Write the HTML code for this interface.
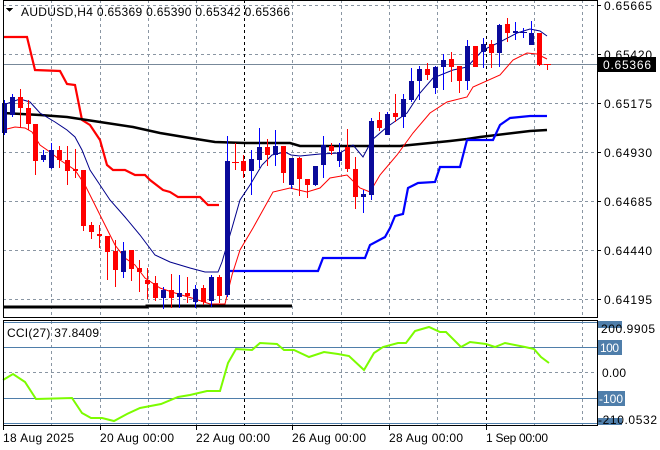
<!DOCTYPE html>
<html><head><meta charset="utf-8"><style>
html,body{margin:0;padding:0;background:#fff;}
svg{display:block;font-family:"Liberation Sans",sans-serif;}
</style></head><body>
<svg width="660" height="450" viewBox="0 0 660 450" xmlns="http://www.w3.org/2000/svg" shape-rendering="crispEdges">
<rect width="660" height="450" fill="#fff"/>
<g stroke="#8a96a3" stroke-width="1" stroke-dasharray="3,3">
<line x1="3" y1="5.5" x2="597" y2="5.5"/><line x1="3" y1="54.5" x2="597" y2="54.5"/><line x1="3" y1="103.5" x2="597" y2="103.5"/><line x1="3" y1="152.5" x2="597" y2="152.5"/><line x1="3" y1="201.5" x2="597" y2="201.5"/><line x1="3" y1="250.5" x2="597" y2="250.5"/><line x1="3" y1="299.5" x2="597" y2="299.5"/>
<line x1="51.5" y1="0" x2="51.5" y2="318"/><line x1="100.5" y1="0" x2="100.5" y2="318"/><line x1="148.5" y1="0" x2="148.5" y2="318"/><line x1="196.5" y1="0" x2="196.5" y2="318"/><line x1="292.5" y1="0" x2="292.5" y2="318"/><line x1="341.5" y1="0" x2="341.5" y2="318"/><line x1="389.5" y1="0" x2="389.5" y2="318"/><line x1="437.5" y1="0" x2="437.5" y2="318"/><line x1="534.5" y1="0" x2="534.5" y2="318"/><line x1="582.5" y1="0" x2="582.5" y2="318"/>
<line x1="51.5" y1="321" x2="51.5" y2="425"/><line x1="100.5" y1="321" x2="100.5" y2="425"/><line x1="148.5" y1="321" x2="148.5" y2="425"/><line x1="196.5" y1="321" x2="196.5" y2="425"/><line x1="292.5" y1="321" x2="292.5" y2="425"/><line x1="341.5" y1="321" x2="341.5" y2="425"/><line x1="389.5" y1="321" x2="389.5" y2="425"/><line x1="437.5" y1="321" x2="437.5" y2="425"/><line x1="534.5" y1="321" x2="534.5" y2="425"/><line x1="582.5" y1="321" x2="582.5" y2="425"/>
<line x1="3" y1="372.5" x2="597" y2="372.5"/>
</g>
<g stroke="#000" stroke-dasharray="3,3">
<line x1="244.5" y1="0" x2="244.5" y2="318"/><line x1="486.5" y1="0" x2="486.5" y2="318"/>
<line x1="244.5" y1="321" x2="244.5" y2="425"/><line x1="486.5" y1="321" x2="486.5" y2="425"/>
</g>
<line x1="3" y1="64.5" x2="597" y2="64.5" stroke="#778899"/>
<g stroke="#4f7eaa"><line x1="3" y1="322.5" x2="597" y2="322.5"/><line x1="3" y1="347.5" x2="597" y2="347.5"/><line x1="3" y1="398.5" x2="597" y2="398.5"/><line x1="3" y1="423.5" x2="597" y2="423.5"/></g>
<g shape-rendering="auto" fill="none">
<polyline stroke="#ff0000" stroke-width="2.2" points="3,37 27,37 35,70 60,71 67,84 75,85 82,120 90,125 100,140 107,165 113,170 125,170 135,175 145,175 150,180 163,190 170,192 178,197 200,197 208,205 219,205"/>
<polyline stroke="#000" stroke-width="2.5" points="3,113 40,115 67,117 100,122 133,127 160,133 190,138 215,142 245,143 290,143 300,146 400,146 420,144 450,141 467,139 480,137 530,131 547,130"/>
<polyline stroke="#000" stroke-width="3" points="3,307 147,307 147,306 292,306"/>
<polyline stroke="#0000ff" stroke-width="2.2" points="228,271 318,271 323,258 365,258 370,245 385,237 390,228 395,216 403,214 408,188 418,183 435,182 440,167 460,167 467,140 493,140 500,125 510,118 530,116 547,116"/>
<polyline stroke="#00008b" stroke-width="1" points="3,105 20,99 30,102 40,113 55,122 67,130 75,137 82,150 90,170 100,185 110,200 125,217 140,235 155,255 170,262 190,268 205,272 218,272 222,262 232,228 240,200 250,185 262,165 272,155 285,152 291,155 300,156 320,154 340,153 353,145 363,157 372,140 387,127 407,113 420,93 433,78 453,70 467,67 483,50 500,42 517,33 530,29 540,31 547,36"/>
<polyline stroke="#ff0000" stroke-width="1" points="3,130 15,127 25,128 32,132 40,145 50,152 60,160 75,170 85,185 95,205 105,225 115,245 125,258 135,265 145,278 160,288 175,293 195,299 210,304 225,304 232,275 240,250 253,228 273,192 290,188 307,192 320,188 330,178 347,175 360,188 370,192 380,175 397,155 413,133 430,113 447,102 467,97 473,87 500,75 513,60 527,53 537,54 547,59"/>
<polyline stroke="#7cfc00" stroke-width="2" points="3,380 13,374 25,382 36,399 72,398 82,413 91,418 102,418 114,421 127,414 140,408 161,404 178,397 190,395 207,391 220,391 228,363 236,349 252,350 260,343 277,344 284,350 294,350 309,357 324,352 338,354 349,356 364,370 374,353 383,347 398,343 406,343 415,331 429,327 440,332 446,332 461,347 470,342 486,344 495,347 505,343 525,347 534,349 541,357 549,363"/>
</g>
<g stroke-width="1">
<g stroke="#0000ff"><line x1="4.5" y1="100" x2="4.5" y2="135"/><line x1="12.5" y1="94" x2="12.5" y2="117"/><line x1="43.5" y1="150" x2="43.5" y2="162"/><line x1="51.5" y1="143" x2="51.5" y2="169"/><line x1="123.5" y1="242" x2="123.5" y2="278"/><line x1="163.5" y1="287" x2="163.5" y2="309"/><line x1="179.5" y1="275" x2="179.5" y2="308"/><line x1="195.5" y1="285" x2="195.5" y2="308"/><line x1="211.5" y1="275" x2="211.5" y2="307"/><line x1="227.5" y1="136" x2="227.5" y2="297"/><line x1="251.5" y1="150" x2="251.5" y2="195"/><line x1="259.5" y1="128" x2="259.5" y2="168"/><line x1="275.5" y1="130" x2="275.5" y2="166"/><line x1="291.5" y1="158" x2="291.5" y2="189"/><line x1="315.5" y1="166" x2="315.5" y2="186"/><line x1="323.5" y1="136" x2="323.5" y2="178"/><line x1="339.5" y1="143" x2="339.5" y2="167"/><line x1="363.5" y1="190" x2="363.5" y2="213"/><line x1="371.5" y1="118" x2="371.5" y2="200"/><line x1="387.5" y1="112" x2="387.5" y2="135"/><line x1="403.5" y1="94" x2="403.5" y2="128"/><line x1="411.5" y1="68" x2="411.5" y2="102"/><line x1="419.5" y1="66" x2="419.5" y2="100"/><line x1="435.5" y1="66" x2="435.5" y2="94"/><line x1="443.5" y1="54" x2="443.5" y2="90"/><line x1="467.5" y1="40" x2="467.5" y2="90"/><line x1="483.5" y1="38" x2="483.5" y2="68"/><line x1="499.5" y1="24" x2="499.5" y2="67"/><line x1="515.5" y1="22" x2="515.5" y2="40"/><line x1="523.5" y1="28" x2="523.5" y2="38"/><line x1="531.5" y1="21" x2="531.5" y2="45"/></g>
<g fill="#0a0a9a"><rect x="2" y="103" width="5" height="30"/><rect x="10" y="97" width="5" height="18"/><rect x="41" y="155" width="5" height="5"/><rect x="49" y="150" width="5" height="18"/><rect x="121" y="251" width="5" height="21"/><rect x="161" y="290" width="5" height="8"/><rect x="177" y="293" width="5" height="4"/><rect x="193" y="289" width="5" height="13"/><rect x="209" y="277" width="5" height="24"/><rect x="225" y="161" width="5" height="134"/><rect x="249" y="159" width="5" height="12"/><rect x="257" y="147" width="5" height="13"/><rect x="273" y="146" width="5" height="9"/><rect x="289" y="158" width="5" height="27"/><rect x="313" y="166" width="5" height="19"/><rect x="321" y="145" width="5" height="20"/><rect x="337" y="152" width="5" height="9"/><rect x="361" y="194" width="5" height="3"/><rect x="369" y="121" width="5" height="74"/><rect x="385" y="114" width="5" height="21"/><rect x="401" y="99" width="5" height="18"/><rect x="409" y="81" width="5" height="19"/><rect x="417" y="69" width="5" height="12"/><rect x="433" y="67" width="5" height="21"/><rect x="441" y="60" width="5" height="7"/><rect x="465" y="46" width="5" height="35"/><rect x="481" y="44" width="5" height="8"/><rect x="497" y="25" width="5" height="28"/><rect x="513" y="31" width="5" height="2"/><rect x="520" y="32" width="7" height="1"/><rect x="529" y="33" width="5" height="12"/></g>
<g stroke="#ff0000"><line x1="20.5" y1="89" x2="20.5" y2="127"/><line x1="28.5" y1="100" x2="28.5" y2="130"/><line x1="35.5" y1="124" x2="35.5" y2="175"/><line x1="59.5" y1="146" x2="59.5" y2="168"/><line x1="67.5" y1="146" x2="67.5" y2="185"/><line x1="75.5" y1="149" x2="75.5" y2="178"/><line x1="83.5" y1="170" x2="83.5" y2="231"/><line x1="91.5" y1="222" x2="91.5" y2="239"/><line x1="99.5" y1="225" x2="99.5" y2="248"/><line x1="107.5" y1="236" x2="107.5" y2="280"/><line x1="115.5" y1="240" x2="115.5" y2="287"/><line x1="131.5" y1="250" x2="131.5" y2="281"/><line x1="139.5" y1="260" x2="139.5" y2="292"/><line x1="147.5" y1="268" x2="147.5" y2="299"/><line x1="155.5" y1="276" x2="155.5" y2="301"/><line x1="171.5" y1="274" x2="171.5" y2="308"/><line x1="187.5" y1="277" x2="187.5" y2="303"/><line x1="203.5" y1="285" x2="203.5" y2="305"/><line x1="219.5" y1="275" x2="219.5" y2="303"/><line x1="235.5" y1="143" x2="235.5" y2="170"/><line x1="243.5" y1="155" x2="243.5" y2="178"/><line x1="267.5" y1="139" x2="267.5" y2="166"/><line x1="283.5" y1="146" x2="283.5" y2="183"/><line x1="299.5" y1="157" x2="299.5" y2="196"/><line x1="307.5" y1="179" x2="307.5" y2="198"/><line x1="331.5" y1="143" x2="331.5" y2="155"/><line x1="347.5" y1="129" x2="347.5" y2="172"/><line x1="355.5" y1="157" x2="355.5" y2="209"/><line x1="379.5" y1="112" x2="379.5" y2="131"/><line x1="395.5" y1="94" x2="395.5" y2="122"/><line x1="427.5" y1="63" x2="427.5" y2="80"/><line x1="451.5" y1="52" x2="451.5" y2="82"/><line x1="459.5" y1="66" x2="459.5" y2="93"/><line x1="475.5" y1="46" x2="475.5" y2="67"/><line x1="491.5" y1="40" x2="491.5" y2="68"/><line x1="507.5" y1="18" x2="507.5" y2="42"/><line x1="539.5" y1="33" x2="539.5" y2="66"/><line x1="547.5" y1="64" x2="547.5" y2="70"/></g>
<g fill="#ff0000"><rect x="18" y="97" width="5" height="11"/><rect x="26" y="108" width="5" height="16"/><rect x="33" y="124" width="5" height="37"/><rect x="57" y="150" width="5" height="10"/><rect x="65" y="160" width="5" height="11"/><rect x="73" y="169" width="5" height="2"/><rect x="81" y="170" width="5" height="56"/><rect x="89" y="225" width="5" height="7"/><rect x="97" y="234" width="5" height="2"/><rect x="105" y="236" width="5" height="16"/><rect x="113" y="251" width="5" height="19"/><rect x="129" y="250" width="5" height="19"/><rect x="137" y="268" width="5" height="4"/><rect x="145" y="280" width="5" height="4"/><rect x="153" y="283" width="5" height="15"/><rect x="169" y="290" width="5" height="8"/><rect x="185" y="293" width="5" height="3"/><rect x="201" y="288" width="5" height="14"/><rect x="217" y="277" width="5" height="19"/><rect x="232" y="162" width="7" height="1"/><rect x="241" y="161" width="5" height="10"/><rect x="265" y="147" width="5" height="8"/><rect x="281" y="146" width="5" height="27"/><rect x="297" y="158" width="5" height="21"/><rect x="305" y="179" width="5" height="6"/><rect x="329" y="146" width="5" height="5"/><rect x="345" y="147" width="5" height="22"/><rect x="353" y="169" width="5" height="28"/><rect x="377" y="120" width="5" height="8"/><rect x="393" y="113" width="5" height="4"/><rect x="425" y="69" width="5" height="6"/><rect x="449" y="59" width="5" height="8"/><rect x="457" y="66" width="5" height="15"/><rect x="473" y="46" width="5" height="21"/><rect x="489" y="44" width="5" height="9"/><rect x="505" y="24" width="5" height="9"/><rect x="537" y="33" width="5" height="32"/><rect x="544" y="64" width="7" height="1"/></g>
</g>
<rect x="3.5" y="0.5" width="594" height="317" fill="none" stroke="#000"/>
<rect x="3.5" y="320.5" width="594" height="105" fill="none" stroke="#000"/>
<g stroke="#000"><line x1="3.5" y1="426" x2="3.5" y2="430"/><line x1="100.5" y1="426" x2="100.5" y2="430"/><line x1="196.5" y1="426" x2="196.5" y2="430"/><line x1="292.5" y1="426" x2="292.5" y2="430"/><line x1="389.5" y1="426" x2="389.5" y2="430"/><line x1="486.5" y1="426" x2="486.5" y2="430"/>
<line x1="598" y1="5.5" x2="601" y2="5.5"/><line x1="598" y1="54.5" x2="601" y2="54.5"/><line x1="598" y1="103.5" x2="601" y2="103.5"/><line x1="598" y1="152.5" x2="601" y2="152.5"/><line x1="598" y1="201.5" x2="601" y2="201.5"/><line x1="598" y1="250.5" x2="601" y2="250.5"/><line x1="598" y1="299.5" x2="601" y2="299.5"/></g>
<g font-size="12" fill="#000">
<text x="604" y="10" textLength="48">0.65665</text><text x="604" y="59" textLength="48">0.65420</text><text x="604" y="108" textLength="48">0.65175</text><text x="604" y="157" textLength="48">0.64930</text><text x="604" y="206" textLength="48">0.64685</text><text x="604" y="255" textLength="48">0.64440</text><text x="604" y="304" textLength="48">0.64195</text>
</g>
<rect x="598" y="57" width="58" height="15" fill="#000"/>
<text x="603" y="69" font-size="12" fill="#fff" textLength="48">0.65366</text>
<rect x="598" y="321" width="24" height="7" fill="#4f7eaa"/>
<rect x="598" y="340" width="24" height="15" fill="#4f7eaa"/><text x="600" y="352" font-size="12" fill="#fff" textLength="19">100</text>
<text x="602" y="377" font-size="12" fill="#000" textLength="24">0.00</text>
<rect x="598" y="391" width="27" height="15" fill="#4f7eaa"/><text x="599" y="403" font-size="12" fill="#fff" textLength="24">-100</text>
<rect x="598" y="418" width="24" height="7" fill="#4f7eaa"/>
<text x="601" y="333" font-size="12" fill="#000" textLength="54">200.9905</text>
<text x="598" y="424" font-size="12" fill="#000" textLength="59">-210.0532</text>
<path d="M6,8 L13,8 L9.5,12 Z" fill="#000"/>
<text x="21" y="16" font-size="12" fill="#000" textLength="269">AUDUSD,H4  0.65369 0.65390 0.65342 0.65366</text>
<text x="7" y="337" font-size="12" fill="#000" textLength="92">CCI(27) 37.8409</text>
<g font-size="12" fill="#000">
<text x="3" y="442" textLength="71">18 Aug 2025</text><text x="100" y="442" textLength="74">20 Aug 00:00</text><text x="196" y="442" textLength="74">22 Aug 00:00</text><text x="292" y="442" textLength="74">26 Aug 00:00</text><text x="389" y="442" textLength="74">28 Aug 00:00</text><text x="486" y="442" textLength="62">1 Sep 00:00</text>
</g>
</svg>
</body></html>
